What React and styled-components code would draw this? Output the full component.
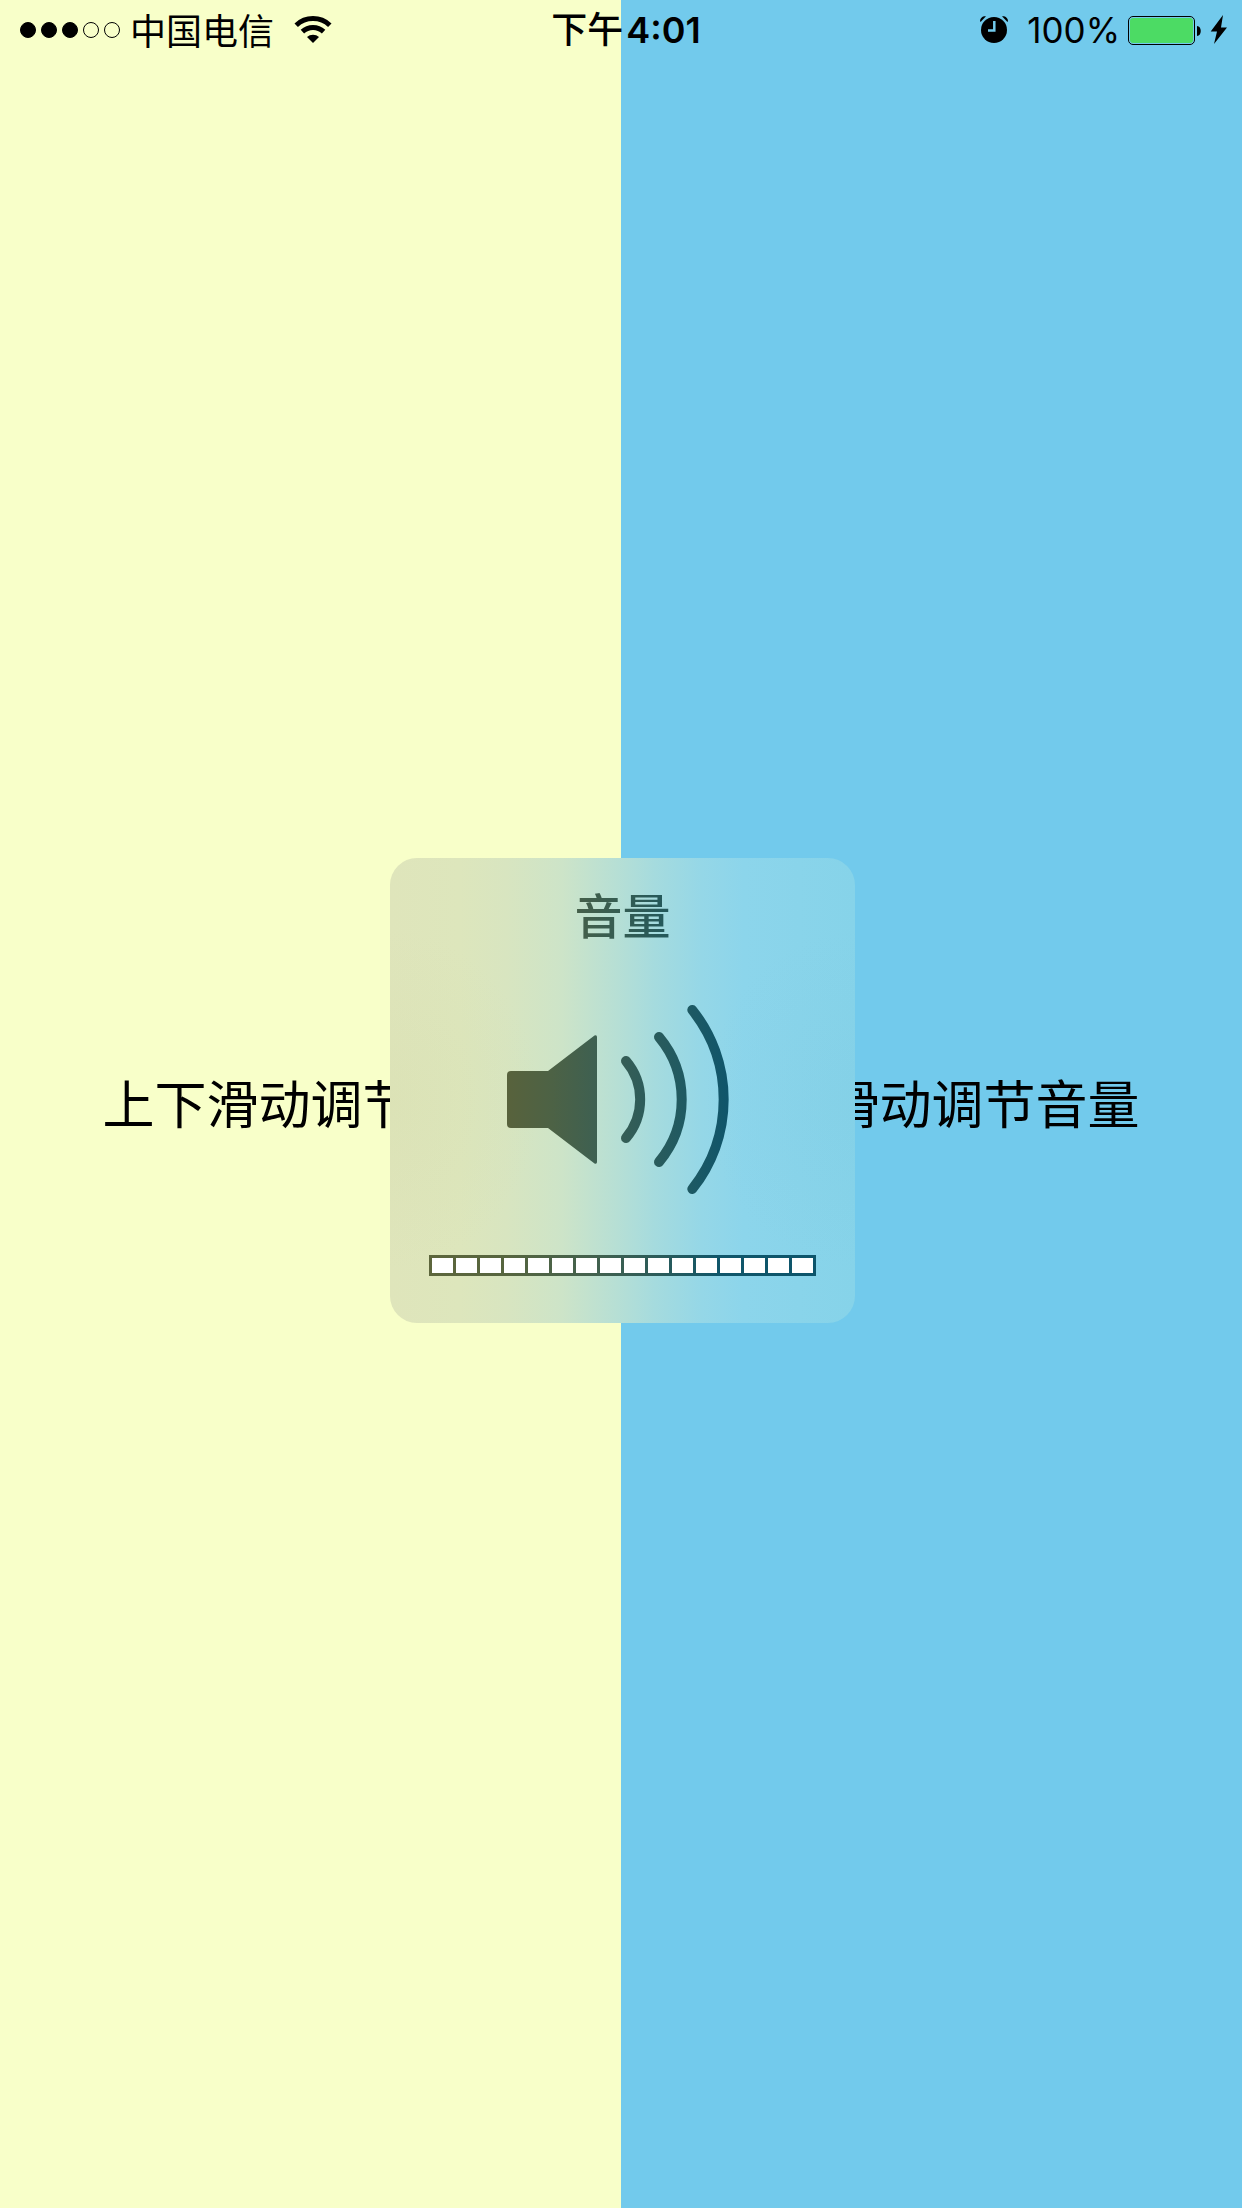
import React from "react";
import styled, { createGlobalStyle } from "styled-components";

const YELLOW = "#f8ffc9";
const BLUE = "#72caec";

const GlobalStyle = createGlobalStyle`
  *, *::before, *::after { box-sizing: border-box; }
  body {
    margin: 0;
    color: #000;
    font-family: Inter, "Noto Sans CJK SC", sans-serif;
  }
`;

const Screen = styled.main`
  position: relative;
  display: grid;
  min-height: 100vh;
`;

const Halves = styled.div`
  display: grid;
  grid-template-columns: 1fr 1fr;
`;

const Half = styled.section`
  display: flex;
  align-items: center;
  justify-content: center;
  background: ${(p) => p.$color};
`;

const Hint = styled.p`
  margin: 0;
  padding-top: 4px;
  font-size: 52px;
  line-height: 72px;
  font-weight: 400;
  white-space: nowrap;
`;

const StatusBar = styled.header`
  position: absolute;
  top: 0;
  left: 0;
  right: 0;
  display: grid;
  grid-template-columns: 1fr auto 1fr;
  align-items: center;
  height: 60px;
  padding: 0 14px 0 20px;
  font-size: 36px;
  line-height: 48px;
  white-space: nowrap;
`;

const StatusGroup = styled.div`
  display: flex;
  align-items: center;
  justify-content: ${(p) => (p.$end ? "flex-end" : "flex-start")};
`;

const Signal = styled.div`
  display: flex;
  gap: 5px;
  margin-right: 10px;
`;

const Dot = styled.span`
  width: 16px;
  height: 16px;
  border: 1px solid #000;
  border-radius: 50%;
  background: ${(p) => (p.$on ? "#000" : "transparent")};
`;

const Carrier = styled.span`
  margin-right: 20px;
  padding-top: 3px;
  font-weight: 400;
`;

const Time = styled.time`
  display: flex;
  gap: 3px;
  padding-left: 4px;
  font-weight: 600;
`;

const Meridiem = styled.span`
  font-weight: 500;
`;

const Percent = styled.span`
  margin: 0 8px 0 18px;
  font-size: 35px;
  font-weight: 400;
`;

const Icon = styled.svg`
  display: block;
  flex: none;
`;

const Power = styled.div`
  display: flex;
  align-items: center;
  gap: 8px;
`;

const VolumePanel = styled.aside`
  position: absolute;
  top: calc(50% - 246px);
  left: calc(50% - 231px);
  display: flex;
  flex-direction: column;
  align-items: center;
  width: 465px;
  height: 465px;
  padding: 23px 39px 47px;
  border-radius: 27px;
  background:
    radial-gradient(ellipse 150px 170px at 0% 52%, rgba(208, 217, 166, 0.22), transparent),
    radial-gradient(ellipse 150px 170px at 100% 52%, rgba(120, 195, 220, 0.15), transparent),
    linear-gradient(
      90deg,
      #dfe5bb 0%,
      #dde6bc 15%,
      #d8e5c0 25%,
      #cde4c8 37%,
      #b6dfd5 49%,
      #a5dbde 57%,
      #95d7e7 67%,
      #8cd5eb 76%,
      #86d3e9 100%
    );
`;

const PanelTitle = styled.h1`
  margin: 0 0 52px;
  font-size: 48px;
  line-height: 72px;
  font-weight: 500;
  color: transparent;
  background: linear-gradient(90deg, #466049, #22585c);
  background-clip: text;
`;

const Level = styled.div`
  display: grid;
  grid-template-columns: repeat(16, 1fr);
  gap: 3px;
  width: 100%;
  margin-top: auto;
  padding: 3px;
  background: linear-gradient(90deg, #5d663c 0%, #56653f 20%, #42614e 43%, #2a5b5a 60%, #10566a 75%, #0d556b 100%);
`;

const Segment = styled.span`
  height: 15px;
  background: #fff;
`;

function WifiIcon() {
  return (
    <Icon width="38" height="28" viewBox="-19 -27 38 28" aria-hidden="true">
      <g fill="none" stroke="#000" strokeWidth="5">
        <path d="M-16.8 -17.8A24.5 24.5 0 0 1 16.8 -17.8" />
        <path d="M-10.6 -11.4A15.5 15.5 0 0 1 10.6 -11.4" />
      </g>
      <path d="M0 0L-6 -6A9 9 0 0 1 6 -6Z" />
    </Icon>
  );
}

function AlarmIcon() {
  return (
    <Icon width="30" height="30" viewBox="979 16 30 30" aria-hidden="true">
      <circle cx="994" cy="31" r="13" />
      <path d="M980 22.5C980 19 982.5 17 986 17.3L980.8 22.8Z" />
      <path d="M1008 22.5C1008 19 1005.5 17 1002 17.3L1007.2 22.8Z" />
      <path d="M994.3 22V31.5H988" fill="none" stroke={BLUE} strokeWidth="2.5" />
    </Icon>
  );
}

function BatteryIcon() {
  return (
    <Icon width="74" height="29" viewBox="0 0 74 29" aria-hidden="true">
      <rect x="0.5" y="0.5" width="66" height="28" rx="4.5" fill="none" stroke="#000" />
      <rect x="2" y="2" width="63" height="25" rx="3" fill="#4cdb64" />
      <path d="M69 10C74 10 74 20 69 20Z" />
    </Icon>
  );
}

function BoltIcon() {
  return (
    <Icon width="18" height="30" viewBox="1210 15 18 30" aria-hidden="true">
      <path d="M1223 15L1210.7 31.5H1217L1214 44L1227 27.5H1221Z" />
    </Icon>
  );
}

function SpeakerIcon() {
  return (
    <Icon width="231" height="189" viewBox="507 1005 231 189" aria-hidden="true">
      <defs>
        <linearGradient id="tint" gradientUnits="userSpaceOnUse" x1="507" y1="0" x2="729" y2="0">
          <stop offset="0" stopColor="#58623c" />
          <stop offset="0.2" stopColor="#4d6245" />
          <stop offset="0.4" stopColor="#3e6051" />
          <stop offset="0.6" stopColor="#2f5c59" />
          <stop offset="0.78" stopColor="#215a61" />
          <stop offset="1" stopColor="#0f556b" />
        </linearGradient>
      </defs>
      <path
        fill="url(#tint)"
        d="M511 1071H548L594.5 1035.5Q597 1034.5 597 1037V1162Q597 1164.5 594.5 1163.5L548 1128H511Q507 1128 507 1124V1075Q507 1071 511 1071Z"
      />
      <g fill="none" stroke="url(#tint)" strokeWidth="10" strokeLinecap="round">
        <path d="M626 1061A59.4 59.4 0 0 1 626 1138" />
        <path d="M659 1037A97.4 97.4 0 0 1 659 1162" />
        <path d="M692.3 1010A143.4 143.4 0 0 1 692.3 1189" />
      </g>
    </Icon>
  );
}

const signal = [true, true, true, false, false];

export default function App() {
  return (
    <>
      <GlobalStyle />
      <Screen lang="zh-CN">
        <Halves>
          <Half $color={YELLOW}>
            <Hint>上下滑动调节亮度</Hint>
          </Half>
          <Half $color={BLUE}>
            <Hint>上下滑动调节音量</Hint>
          </Half>
        </Halves>

        <StatusBar>
          <StatusGroup>
            <Signal>
              {signal.map((on, i) => (
                <Dot key={i} $on={on} />
              ))}
            </Signal>
            <Carrier>中国电信</Carrier>
            <WifiIcon />
          </StatusGroup>
          <Time>
            <Meridiem>下午</Meridiem>
            <span>4:01</span>
          </Time>
          <StatusGroup $end>
            <AlarmIcon />
            <Percent>100%</Percent>
            <Power>
              <BatteryIcon />
              <BoltIcon />
            </Power>
          </StatusGroup>
        </StatusBar>

        <VolumePanel>
          <PanelTitle>音量</PanelTitle>
          <SpeakerIcon />
          <Level role="meter" aria-label="音量" aria-valuemin={0} aria-valuemax={16} aria-valuenow={16}>
            {Array.from({ length: 16 }, (_, i) => (
              <Segment key={i} />
            ))}
          </Level>
        </VolumePanel>
      </Screen>
    </>
  );
}
